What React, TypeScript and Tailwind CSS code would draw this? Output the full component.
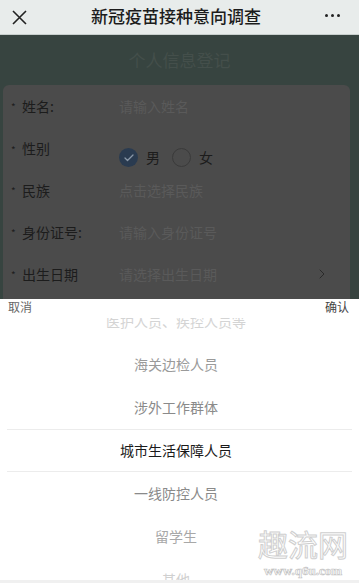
import { ChevronRight, Check } from "lucide-react";

const rows = [
  { label: "姓名:", placeholder: "请输入姓名" },
  { label: "民族", placeholder: "点击选择民族" },
  { label: "身份证号:", placeholder: "请输入身份证号" },
];

const options = [
  { text: "医护人员、疾控人员等", cls: "text-[#d4d4d4]" },
  { text: "海关边检人员", cls: "text-[#9a9a9a]" },
  { text: "涉外工作群体", cls: "text-[#8a8a8a]" },
  { text: "城市生活保障人员", cls: "text-[#1a1a1a]" },
  { text: "一线防控人员", cls: "text-[#8a8a8a]" },
  { text: "留学生", cls: "text-[#a8a8a8]" },
  { text: "其他", cls: "text-[#d0d0d0]" },
];

function Row({ label, placeholder, chevron }: { label: string; placeholder: string; chevron?: boolean }) {
  return (
    <div className="flex items-center h-[42px]">
      <span className="w-[19px] pl-[8px] text-[10px] text-[#1e1e1e]">*</span>
      <span className="w-[97px] text-[14px] text-[#1c1c1c]">{label}</span>
      <span className="flex-1 text-[14px] text-[#5a5a5a]">{placeholder}</span>
      {chevron && <ChevronRight className="w-4 h-4 mr-[20px] text-[#2a2a2a]" strokeWidth={1.5} />}
    </div>
  );
}

export default function App() {
  return (
    <div className="w-[359px] h-[583px] overflow-hidden flex flex-col font-['Noto_Sans_CJK_SC',sans-serif]">
      <div className="h-[35px] shrink-0 bg-[#e8eceb] border-b border-[#c8cfcd] flex items-center px-[12px]">
        <svg width="15" height="15" viewBox="0 0 15 15" className="text-[#222]">
          <path d="M1 1L14 14M14 1L1 14" stroke="currentColor" strokeWidth="1.6" />
        </svg>
        <div className="flex-1 text-center text-[17px] font-medium text-[#1c1c1c] leading-none -mt-[4px]">新冠疫苗接种意向调查</div>
        <div className="flex gap-[3px] mr-[7px] -mt-[4px]">
          <span className="w-[3px] h-[3px] rounded-full bg-[#222]" />
          <span className="w-[3px] h-[3px] rounded-full bg-[#222]" />
          <span className="w-[3px] h-[3px] rounded-full bg-[#222]" />
        </div>
      </div>

      <div className="h-[264px] shrink-0 bg-[#374440] flex flex-col overflow-hidden">
        <div className="h-[50px] flex items-center justify-center text-[17px] text-[#444f4b]">个人信息登记</div>
        <div className="ml-[3px] mr-[9px] rounded-t-[6px] bg-[#4b4b4b] flex-1">
          <Row {...rows[0]} />
          <div className="flex items-start h-[42px]">
            <span className="w-[19px] pl-[8px] text-[10px] text-[#1e1e1e] mt-[15px]">*</span>
            <span className="w-[97px] text-[14px] text-[#1c1c1c] mt-[11px]">性别</span>
            <div className="flex items-center mt-[20px]">
              <span className="w-[19px] h-[19px] rounded-full bg-[#2a3b50] flex items-center justify-center">
                <Check className="w-3 h-3 text-[#8a98a8]" strokeWidth={2.5} />
              </span>
              <span className="ml-[8px] text-[14px] text-[#1c1c1c]">男</span>
              <span className="ml-[12px] w-[19px] h-[19px] rounded-full border border-[#3a3a3a]" />
              <span className="ml-[8px] text-[14px] text-[#1c1c1c]">女</span>
            </div>
          </div>
          <Row {...rows[1]} />
          <Row {...rows[2]} />
          <Row label="出生日期" placeholder="请选择出生日期" chevron />
        </div>
      </div>

      <div className="flex-1 bg-white relative overflow-hidden">
        <div className="absolute top-0 left-0 right-0 h-[19px] bg-white flex items-start justify-between px-[8px] text-[12px] text-[#666] z-10 leading-[16px]">
          <span>取消</span>
          <span className="mr-[2px] text-[#444]">确认</span>
        </div>
        <div className="pt-[1px]">
          {options.map((o, i) => (
            <div
              key={o.text}
              className={`h-[43px] flex items-center justify-center pr-[7px] text-[14px] mx-[7px] ${o.cls} ${i === 3 ? "border-y border-[#ececec]" : ""}`}
            >
              {o.text}
            </div>
          ))}
        </div>
        <div className="absolute right-[11px] top-[229px] flex flex-col items-center whitespace-nowrap">
          <span className="text-[30px] leading-[30px] h-[30px] text-transparent [-webkit-text-stroke:1px_#cfcfcf] font-['Noto_Sans_CJK_SC',serif]">趣流网</span>
          <span className="text-[13px] leading-[13px] mt-[6px] font-bold text-transparent [-webkit-text-stroke:0.7px_#c4c4c4] font-['Liberation_Serif',serif]">www.q6u.com</span>
        </div>
        <div className="absolute bottom-0 left-0 right-0 h-[3px] bg-[#f0f0f0]" />
      </div>
    </div>
  );
}
